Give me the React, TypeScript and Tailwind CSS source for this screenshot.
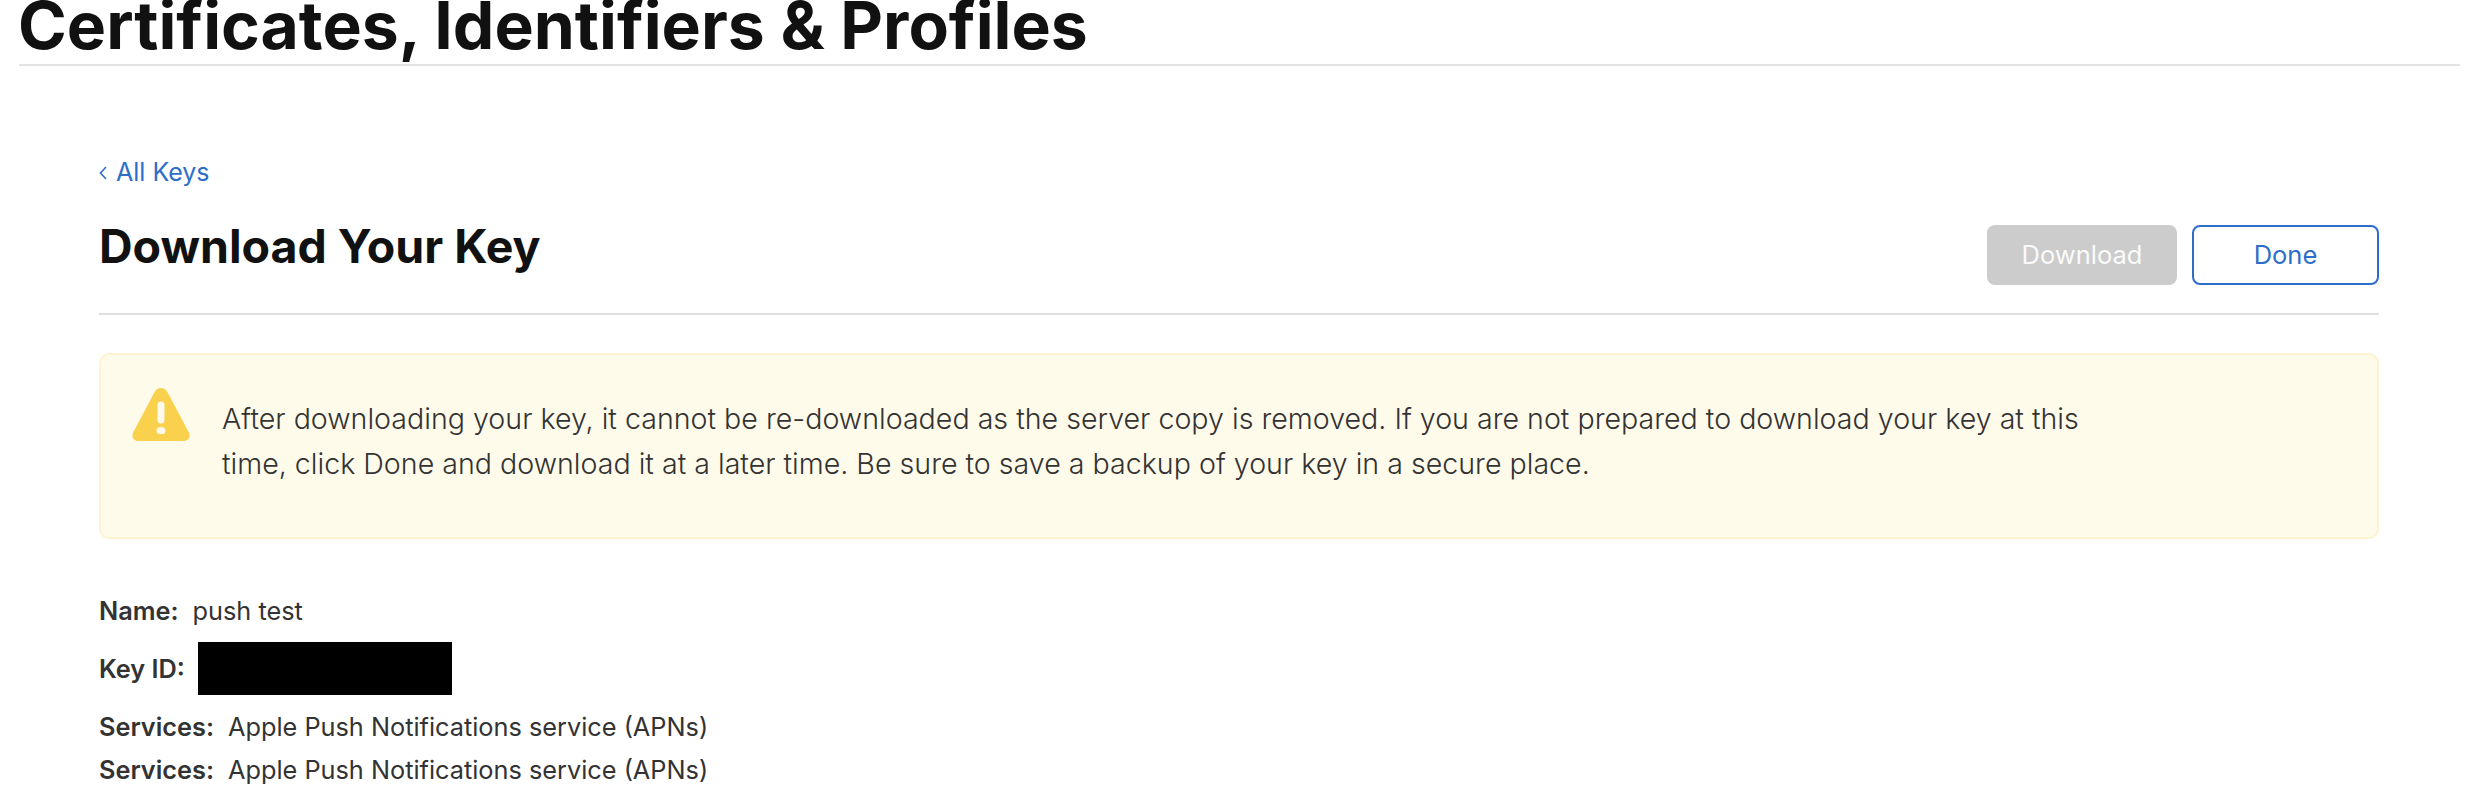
import React from 'react'

function WarningIcon() {
  return (
    <svg viewBox="0 0 58 53" className="h-[53px] w-[58px] shrink-0" aria-hidden="true">
      <path
        d="M22.6 4C25.4-1.3 32.6-1.3 35.4 4L56.6 44C59.2 48.6 56.4 53 51.6 53H6.4C1.6 53-1.2 48.6 1.4 44Z"
        fill="#f9d14c"
      />
      <rect x="25.5" y="13.5" width="7" height="22" rx="3.5" fill="#fefaeb" />
      <ellipse cx="29" cy="42.7" rx="4.5" ry="3.6" fill="#fefaeb" />
    </svg>
  )
}

function DetailRow({ label, value, className }: { label: string; value: string; className: string }) {
  return (
    <div className={`flex items-baseline gap-[14px] text-[25.3px] leading-[29px] text-[#333333] ${className}`}>
      <span className="font-semibold">{label}</span>
      <span>{value}</span>
    </div>
  )
}

export default function App() {
  return (
    <div className="h-[798px] w-[2468px] overflow-hidden bg-white font-['Inter',sans-serif]">
      <header className="ml-[19px] mr-[8px] flex h-[66px] flex-col border-b-2 border-[#e3e3e3]">
        <h1 className="ml-[-1px] mt-[-15px] text-[66px] font-bold leading-[80px] whitespace-nowrap text-[#111111]">
          Certificates, Identifiers &amp; Profiles
        </h1>
      </header>

      <main className="ml-[99px] w-[2280px] pt-[92px]">
        <a className="flex items-center gap-[9px] text-[25px] leading-[29px] text-[#2d6ec9]">
          <svg viewBox="0 0 8 14" className="h-[14px] w-[8px]" fill="none" aria-hidden="true">
            <path d="M7 1 1.5 7 7 13" stroke="currentColor" strokeWidth="1.6" />
          </svg>
          All Keys
        </a>

        <div className="mt-[32px] flex h-[96px] items-start justify-between border-b-2 border-[#dfdfdf]">
          <h2 className="text-[46.5px] font-bold leading-[54px] text-[#111111]">Download Your Key</h2>
          <div className="mt-[6px] flex gap-[15px]">
            <button
              type="button"
              className="h-[60px] w-[190px] rounded-[8px] bg-[#cccccc] text-[25.5px] text-[#fafafa]"
            >
              Download
            </button>
            <button
              type="button"
              className="h-[60px] w-[187px] rounded-[8px] border-2 border-[#2d6ec9] bg-white text-[25.5px] text-[#2d6ec9]"
            >
              Done
            </button>
          </div>
        </div>

        <div className="mt-[38px] flex h-[186px] items-start gap-[32px] rounded-[10px] border-2 border-[#fdf3d0] bg-[#fffbeb] pl-[31px] pt-[33px]">
          <WarningIcon />
          <p className="mt-[8px] w-[1920px] text-[28.6px] font-light leading-[45px] text-[#333333]">
            After downloading your key, it cannot be re-downloaded as the server copy is removed. If you are not
            prepared to download your key at this time, click Done and download it at a later time. Be sure to save a
            backup of your key in a secure place.
          </p>
        </div>

        <DetailRow label="Name:" value="push test" className="mt-[57px]" />
        <div className="mt-[17px] flex h-[53px] items-center gap-[13px] text-[25.3px] text-[#333333]">
          <span className="font-semibold">Key ID:</span>
          <div className="h-[53px] w-[254px] bg-black" />
        </div>
        <DetailRow label="Services:" value="Apple Push Notifications service (APNs)" className="mt-[17px]" />
        <DetailRow label="Services:" value="Apple Push Notifications service (APNs)" className="mt-[14px]" />
      </main>
    </div>
  )
}
